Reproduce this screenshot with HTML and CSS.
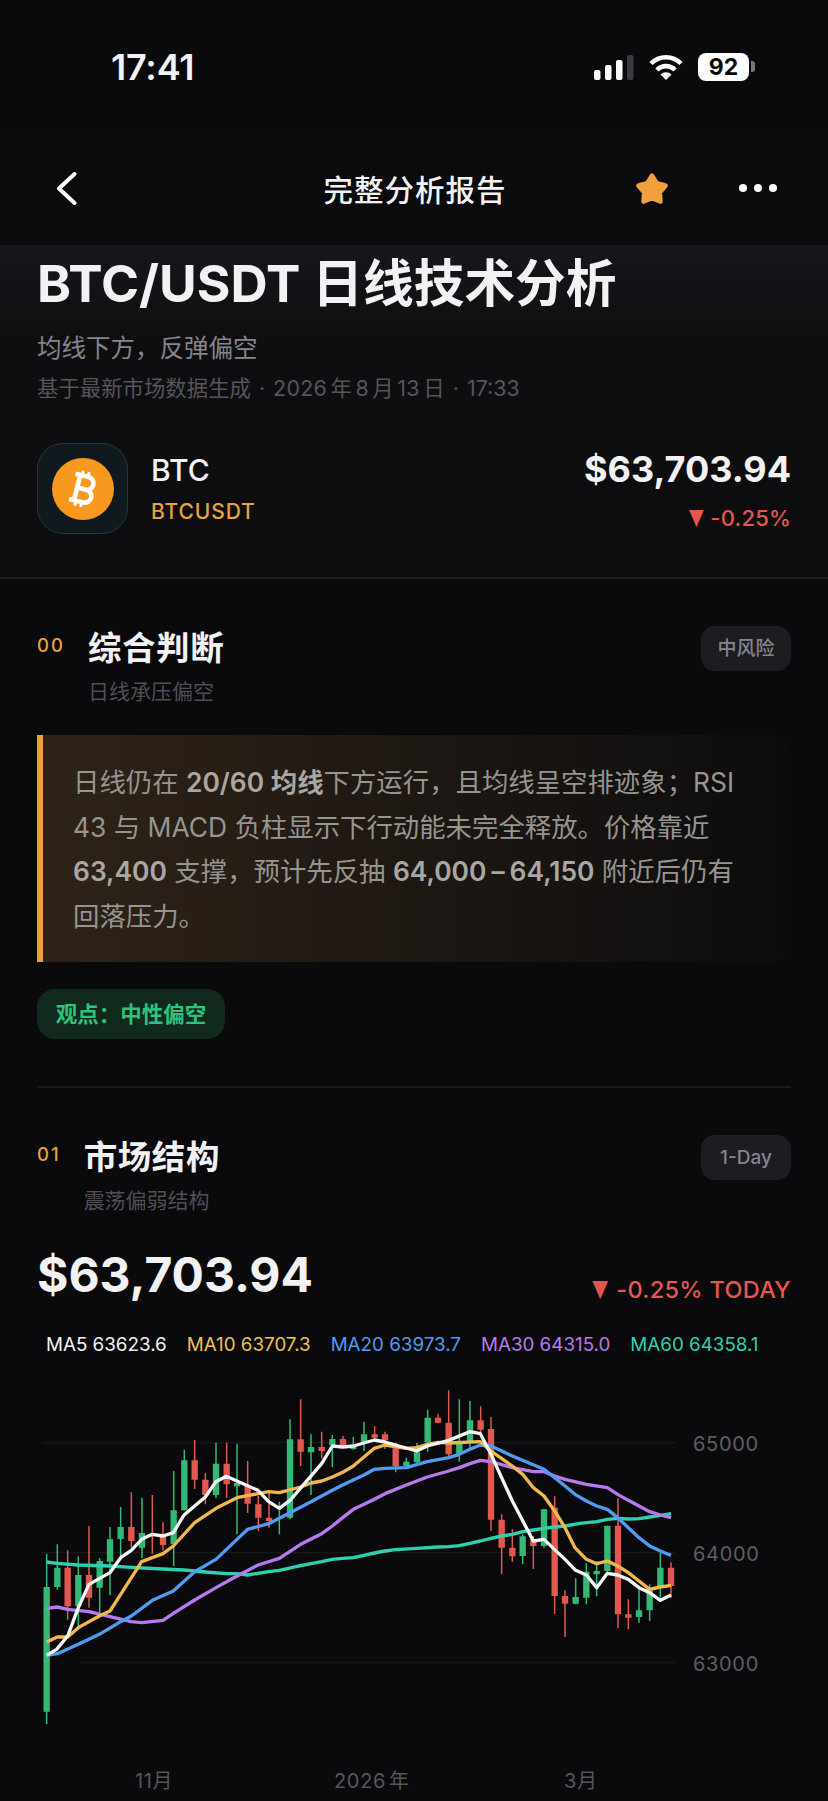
FILE: index.html
```html
<!DOCTYPE html>
<html lang="zh-CN">
<head>
    <meta charset="UTF-8">
    <meta name="viewport" content="width=device-width, initial-scale=1.0">
    <title>完整分析报告</title>
    <link rel="stylesheet" href="styles.css">
</head>
<body>
    <div class="status-bar">
        <span class="status-time">17:41</span>
        <div class="status-icons">
            <svg class="icon-signal" viewBox="0 0 40 26">
                <rect x="0" y="16" width="6.5" height="10" rx="2" fill="#fff"/>
                <rect x="11" y="11" width="6.5" height="15" rx="2" fill="#fff"/>
                <rect x="22" y="6" width="6.5" height="20" rx="2" fill="#fff"/>
                <rect x="33" y="1" width="6.5" height="25" rx="2" fill="#3c3c40"/>
            </svg>
            <svg class="icon-wifi" viewBox="0 0 36 26">
                <path d="M3 9.5A21 21 0 0 1 33 9.5M9 16A12.5 12.5 0 0 1 27 16" fill="none" stroke="#fff" stroke-width="4.6"/>
                <path d="M18 26L12.5 20.5A8 8 0 0 1 23.5 20.5Z" fill="#fff"/>
            </svg>
            <div class="battery">
                <span class="battery-body">92</span>
                <span class="battery-nub"></span>
            </div>
        </div>
    </div>

    <div class="nav-bar">
        <svg class="icon-back" viewBox="0 0 21 33">
            <path d="M18.5 2L3 16.5L18.5 31" fill="none" stroke="#fff" stroke-width="4" stroke-linecap="round" stroke-linejoin="round"/>
        </svg>
        <h1 class="nav-title">完整分析报告</h1>
        <div class="nav-actions">
            <svg class="icon-star" viewBox="0 0 36 35">
                <path d="M18 5L22.7 12.5L31.3 14.7L25.6 21.5L26.2 30.3L18 27L9.8 30.3L10.4 21.5L4.7 14.7L13.3 12.5Z" fill="#f0a03c" stroke="#f0a03c" stroke-width="5" stroke-linejoin="round"/>
            </svg>
            <div class="dots"><i></i><i></i><i></i></div>
        </div>
    </div>

    <header class="hero">
        <h2 class="hero-title"><span class="hero-latin">BTC/USDT</span> 日线技术分析</h2>
        <p class="hero-sub">均线下方，反弹偏空</p>
        <p class="hero-meta">基于最新市场数据生成<span class="sep">·</span><span class="meta-date">2026 年 8 月 13 日</span><span class="sep">·</span>17:33</p>
        <div class="coin-row">
            <div class="coin-icon">
                <svg viewBox="0 0 62 62">
                    <circle cx="31" cy="31" r="31" fill="#f7981f"/>
                    <g transform="rotate(14 31 31)" fill="none" stroke="#fff" stroke-width="4.6">
                        <path d="M20 18H33.5A6.5 6.5 0 0 1 33.5 31H25M25 18V44M25 31H34.5A6.5 6.5 0 0 1 34.5 44H20"/>
                        <path d="M27 13V18M33 13V18M27 44V49M33 44V49" stroke-width="3"/>
                    </g>
                </svg>
            </div>
            <div class="coin-name">
                <span class="coin-symbol">BTC</span>
                <span class="coin-pair">BTCUSDT</span>
            </div>
            <div class="coin-quote">
                <span class="coin-price">$63,703.94</span>
                <span class="coin-change"><span class="tri">▼</span> -0.25%</span>
            </div>
        </div>
    </header>

    <section class="section">
        <div class="section-head">
            <span class="section-num">00</span>
            <div class="section-text">
                <h3>综合判断</h3>
                <p>日线承压偏空</p>
            </div>
            <span class="tag">中风险</span>
        </div>
        <div class="callout">
            日线仍在 <b>20/60 均线</b>下方运行，且均线呈空排迹象；RSI<br>
            43 与 MACD 负柱显示下行动能未完全释放。价格靠近<br>
            <b>63,400</b> 支撑，预计先反抽 <b>64,000<span class="dash">–</span>64,150</b> 附近后仍有<br>
            回落压力。
        </div>
        <div class="view-pill">观点：中性偏空</div>
    </section>

    <section class="section section-market">
        <div class="section-head">
            <span class="section-num">01</span>
            <div class="section-text">
                <h3>市场结构</h3>
                <p>震荡偏弱结构</p>
            </div>
            <span class="tag">1-Day</span>
        </div>
        <div class="price-row">
            <span class="price-big">$63,703.94</span>
            <span class="price-change"><span class="tri">▼</span> -0.25% TODAY</span>
        </div>
        <div class="ma-legend">
            <span class="ma5">MA5 63623.6</span>
            <span class="ma10">MA10 63707.3</span>
            <span class="ma20">MA20 63973.7</span>
            <span class="ma30">MA30 64315.0</span>
            <span class="ma60">MA60 64358.1</span>
        </div>

        <!-- 单位是实际像素的 3 倍 -->
        <svg class="chart" viewBox="0 0 2424 1293">
            <path class="grid" d="M65 215H1965M65 545H1965M180 875H1965"/>

            <path class="wick up" d="M80 548V1060M112 520V656M175 556V770M239 562V725M270 468V672M302 408V560M366 380V562M461 300V585M493 236V418M588 215V382M651 218V490M778 392V490M810 145V445M873 190V372M937 192V288M1000 198V236M1032 152V240M1159 260V290M1191 216V278M1223 116V242M1318 85V272M1350 90V232M1508 490V580M1572 415V530M1667 622V700M1699 576V700M1730 570V676M1762 464V605M1857 655V755M1889 640V750M1921 544V680"/>
            <path class="body up" d="M80 648V1022M112 590V648M175 612V706M239 570V650M270 505V572M302 468V504M366 486V530M461 418V520M493 268V418M588 278V372M651 336V346M810 205V440M873 228V244M937 204V222M1000 226V234M1032 190V215M1159 272V286M1191 244V274M1223 140V214M1318 214V248M1350 148V215M1508 496V555M1572 415V525M1667 678V698M1699 602V680M1730 600V610M1762 464V600M1857 718V738M1889 655V718M1921 590V650"/>
            <path class="wick down" d="M143 538V746M207 465V710M334 364V530M397 372V548M429 454V538M524 207V354M556 306V400M620 215V380M683 270V426M715 375V480M747 366V470M842 85V285M905 182V262M969 195V228M1064 166V204M1095 182V234M1127 215V304M1254 128V157M1286 58V255M1382 106V186M1413 138V480M1445 430V610M1477 475V572M1540 495V594M1604 376V728M1635 658V798M1794 382V772M1825 685V775M1953 574V680"/>
            <path class="body down" d="M143 590V706M207 612V680M334 468V510M429 488V522M524 268V326M556 326V372M620 278V340M683 345V398M715 400V440M747 440V450M842 205V242M905 228V240M969 204V222M1064 190V200M1095 190V208M1127 232V286M1254 140V155M1286 155V250M1382 148V176M1413 174V446M1445 446V530M1477 530V556M1540 505V525M1604 410V675M1635 675V698M1794 464V730M1825 730V740M1953 590V645"/>

            <polyline class="line teal" points="80,573 112,577 175,582 270,585 334,589 429,594 492,597 556,603 619,608 651,608 683,612 746,602 778,598 842,584 905,572 937,565 968,562 1000,560 1032,553 1063,546 1095,540 1127,536 1190,532 1254,528 1286,527 1318,524 1350,517 1381,510 1413,502 1445,495 1477,490 1508,482 1540,477 1572,472 1604,468 1635,465 1680,457 1730,452 1762,445 1793,442 1825,444 1857,443 1889,438 1921,433 1953,428"/>
            <polyline class="line purple" points="80,712 112,708 143,715 207,722 270,737 334,752 365,755 429,748 460,727 524,687 588,650 651,615 714,582 778,562 842,520 905,488 937,465 968,440 1000,415 1032,400 1063,385 1095,368 1159,342 1222,318 1286,300 1318,290 1350,278 1381,268 1413,272 1477,290 1540,302 1572,302 1604,315 1635,325 1699,340 1762,350 1793,370 1825,388 1857,405 1889,422 1921,432 1953,440"/>
            <polyline class="line blue" points="80,853 112,848 175,820 238,790 302,752 334,735 397,688 460,660 524,602 588,565 651,505 683,475 746,458 810,425 873,392 937,358 968,342 1032,312 1063,295 1095,292 1159,290 1222,272 1286,260 1318,250 1350,235 1381,222 1413,225 1477,255 1572,295 1604,320 1635,345 1665,370 1699,390 1730,405 1762,415 1793,440 1825,470 1857,500 1889,525 1921,540 1953,553"/>
            <polyline class="line orange" points="80,813 112,798 143,798 175,770 238,735 270,720 302,670 365,572 429,548 460,525 524,455 588,412 651,380 714,368 746,362 778,365 842,348 873,336 905,330 937,318 968,304 1000,285 1032,258 1063,232 1095,222 1159,232 1190,230 1222,220 1254,214 1286,216 1381,212 1413,240 1477,285 1508,310 1540,350 1572,375 1604,420 1635,470 1665,530 1699,565 1730,578 1762,570 1793,585 1825,605 1857,630 1889,655 1921,648 1953,643"/>
            <polyline class="line white" points="80,853 110,835 143,795 175,710 207,640 270,605 302,560 334,538 365,505 397,490 429,495 460,485 492,432 556,378 588,332 619,316 714,358 746,392 778,412 810,388 905,278 937,225 968,228 1000,225 1063,207 1095,213 1190,240 1222,225 1286,208 1350,182 1381,188 1413,250 1477,390 1540,510 1572,505 1635,565 1667,598 1699,612 1730,650 1762,607 1793,612 1825,625 1857,650 1889,665 1921,688 1953,672"/>

            <text class="axis-y" x="2019" y="239">65000</text>
            <text class="axis-y" x="2019" y="569">64000</text>
            <text class="axis-y" x="2019" y="899">63000</text>
            <text class="axis-x" x="345" y="1252">11月</text>
            <text class="axis-x axis-year" x="942" y="1252">2026 年</text>
            <text class="axis-x" x="1632" y="1252">3月</text>
        </svg>
    </section>
</body>
</html>
```

FILE: styles.css
```css
* {
    box-sizing: border-box;
}
html, body {
    height: 1801px;
}
body {
    margin: 0;
    overflow: hidden;
    background-color: #0a0a0c;
    color: #f2f2f4;
    font-family: Inter, "Noto Sans CJK SC", sans-serif;
}
h1, h2, h3, p {
    margin: 0;
}

/* 状态栏 */
.status-bar {
    height: 133px;
    padding: 0 73px 0 111px;
    display: flex;
    justify-content: space-between;
    align-items: center;
}
.status-time {
    font-size: 36px;
    font-weight: 600;
    letter-spacing: -0.2px;
}
.status-icons {
    display: flex;
    align-items: center;
    gap: 14px;
}
.icon-signal {
    width: 40px;
    height: 26px;
}
.icon-wifi {
    width: 36px;
    height: 26px;
}
.battery {
    display: flex;
    align-items: center;
    gap: 2px;
}
.battery-body {
    width: 51px;
    height: 28px;
    border-radius: 8px;
    background-color: #fff;
    color: #0a0a0c;
    font-size: 23px;
    font-weight: 700;
    line-height: 28px;
    text-align: center;
}
.battery-nub {
    width: 4px;
    height: 11px;
    border-radius: 0 3px 3px 0;
    background-color: #77777b;
}

/* 导航栏 */
.nav-bar {
    height: 112px;
    padding: 0 51px 2px 56px;
    display: grid;
    grid-template-columns: 1fr auto 1fr;
    align-items: center;
    background-color: #0b0b0d;
}
.icon-back {
    width: 21px;
    height: 33px;
}
.nav-title {
    font-size: 29.5px;
    font-weight: 500;
    letter-spacing: 1px;
    margin-left: -3px;
}
.nav-actions {
    display: flex;
    justify-content: flex-end;
    align-items: center;
    gap: 69px;
}
.icon-star {
    width: 36px;
    height: 35px;
}
.dots {
    display: flex;
    gap: 7px;
}
.dots i {
    width: 8px;
    height: 8px;
    border-radius: 50%;
    background-color: #fff;
}

/* 顶部概览 */
.hero {
    height: 334px;
    padding: 8px 37px 0;
    background: linear-gradient(#17171b, #0e0e11 30%, #0d0d10);
    border-bottom: 2px solid #1b1b1f;
}
.hero-title {
    font-size: 50.7px;
    font-weight: 700;
    line-height: 60px;
    color: #f2f2f5;
}
.hero-latin {
    font-size: 51.5px;
}
.hero-sub {
    margin-top: 18px;
    font-size: 24.5px;
    line-height: 32px;
    color: #85858b;
}
.hero-meta {
    margin-top: 10px;
    font-size: 21.4px;
    line-height: 28px;
    color: #55555b;
}
.meta-date {
    word-spacing: -3px;
    letter-spacing: 0.3px;
}
.sep {
    margin: 0 8px;
}
.coin-row {
    margin-top: 41px;
    display: flex;
    align-items: center;
    gap: 23px;
}
.coin-icon {
    width: 91px;
    height: 91px;
    flex: none;
    border: 1px solid #2a343a;
    border-radius: 26px;
    background-color: #0f191e;
    display: flex;
    justify-content: center;
    align-items: center;
}
.coin-icon svg {
    width: 62px;
    height: 62px;
}
.coin-name {
    display: flex;
    flex-direction: column;
    gap: 11px;
}
.coin-symbol {
    font-size: 30px;
    font-weight: 500;
    line-height: 36px;
}
.coin-pair {
    font-size: 21px;
    font-weight: 500;
    line-height: 26px;
    letter-spacing: 0.9px;
    color: #e8a33d;
}
.coin-quote {
    margin-left: auto;
    display: flex;
    flex-direction: column;
    align-items: flex-end;
    gap: 14px;
}
.coin-price {
    font-size: 36px;
    font-weight: 700;
    line-height: 44px;
}
.coin-change {
    font-size: 22px;
    font-weight: 500;
    line-height: 26px;
    letter-spacing: 0.2px;
    color: #e5574e;
}
.tri {
    display: inline-block;
    transform: scaleX(0.72);
    margin-right: -3px;
}

/* 分区 */
.section {
    padding: 47px 37px 47px;
}
.section-market {
    border-top: 2px solid #1b1b1f;
    margin: 0 37px;
    padding: 47px 0 0;
}
.section-head {
    display: flex;
    align-items: flex-start;
}
.section-num {
    margin-top: 6px;
    margin-right: 23px;
    font-size: 18.5px;
    font-weight: 500;
    line-height: 26px;
    letter-spacing: 2px;
    color: #e8a33d;
}
.section-text h3 {
    font-size: 33.5px;
    font-weight: 700;
    line-height: 44px;
    letter-spacing: 0.6px;
}
.section-text p {
    margin-top: 8px;
    font-size: 21px;
    line-height: 28px;
    color: #4f4f55;
}
.tag {
    margin-left: auto;
    width: 90px;
    height: 45px;
    border-radius: 14px;
    background-color: #1d1d21;
    color: #85858b;
    font-size: 19px;
    font-weight: 500;
    line-height: 45px;
    text-align: center;
}
.callout {
    margin-top: 29px;
    padding: 25px 20px 24px 30px;
    border-left: 6px solid #e8a33d;
    border-radius: 0 20px 20px 0;
    background: linear-gradient(90deg, #2f2318, #0c0c0e);
    font-size: 26.4px;
    line-height: 44.6px;
    color: #98948f;
    white-space: nowrap;
}
.callout b {
    font-weight: 600;
    color: #aaa6a2;
}
.dash {
    margin: 0 5px;
}
.view-pill {
    margin-top: 27px;
    width: 188px;
    height: 50px;
    border-radius: 18px;
    background-color: #12291e;
    color: #2fc27b;
    font-size: 21.5px;
    font-weight: 600;
    line-height: 50px;
    text-align: center;
}
.price-row {
    margin-top: 30px;
    display: flex;
    justify-content: space-between;
    align-items: flex-end;
}
.price-big {
    font-size: 48px;
    font-weight: 700;
    line-height: 60px;
}
.price-change {
    font-size: 23.5px;
    font-weight: 500;
    line-height: 30px;
    letter-spacing: 0.3px;
    color: #e5574e;
}
.ma-legend {
    margin-top: 28px;
    padding-left: 9px;
    display: flex;
    gap: 20px;
    font-size: 18.8px;
    line-height: 24px;
    white-space: nowrap;
}
.ma5 { color: #f2f2f4; }
.ma10 { color: #f0c050; }
.ma20 { color: #4f9cf0; }
.ma30 { color: #b57bee; }
.ma60 { color: #2fd0b0; }

/* K 线图 */
.chart {
    display: block;
    width: 808px;
    height: 431px;
    margin: 14px 0 0 -17px;
}
.grid {
    fill: none;
    stroke: #18181b;
    stroke-width: 4;
}
.wick, .body, .line {
    fill: none;
}
.wick {
    stroke-width: 4.5;
}
.body {
    stroke-width: 19;
}
.up {
    stroke: #33b976;
}
.down {
    stroke: #e2574e;
}
.line {
    stroke-width: 10;
    stroke-linejoin: round;
}
.teal { stroke: #2fd0b0; }
.purple { stroke: #b57bee; }
.blue { stroke: #4f9cf0; }
.orange { stroke: #f2b84b; }
.white { stroke: #f5f5f5; }
.axis-y, .axis-x {
    font-size: 60px;
    letter-spacing: 2px;
    fill: #5e5e63;
}
.axis-x {
    fill: #56565b;
}
.axis-year {
    word-spacing: -10px;
}
```
